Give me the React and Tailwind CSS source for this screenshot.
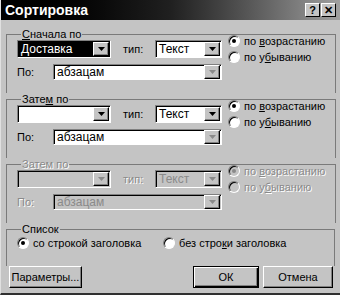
import React from 'react'

const font = { fontFamily: '"Liberation Sans", Arial, sans-serif' }

const Arrow = ({ disabled }) => (
    <span className="flex h-[14px] w-[16px] shrink-0 items-center justify-center border border-t-white border-l-white border-b-black border-r-black bg-[#c4c4c4] shadow-[inset_-1px_-1px_0_#808080]">
        <svg width="7" height="4" viewBox="0 0 7 4">
            <path d="M0 0h7L3.5 4z" fill={disabled ? '#8a8a8a' : '#000'} />
        </svg>
    </span>
)

const Combo = ({ width, value, selected, disabled, dim }) => (
    <div className={`flex items-center justify-between border border-t-[#808080] border-l-[#808080] border-b-white border-r-white shadow-[inset_1px_1px_0_#000] pl-[3px] pr-[1px] ${width} ${selected ? 'bg-black text-white' : disabled ? 'bg-[#c4c4c4] text-[#8a8a8a]' : 'bg-white text-black'}`}>
        <span className="text-[12px] leading-none">{value}</span>
        <Arrow disabled={dim || disabled} />
    </div>
)

const Radio = ({ checked, disabled, children }) => (
    <label className={`flex h-[16px] items-center gap-[4px] whitespace-nowrap text-[11px] leading-[12px] ${disabled ? 'text-[#8a8a8a] [text-shadow:1px_1px_0_#fff]' : 'text-black'}`}>
        <span className={`flex h-[12px] w-[12px] shrink-0 items-center justify-center rounded-full border border-t-[#808080] border-l-[#808080] border-b-white border-r-white shadow-[inset_1px_1px_0_#000] ${disabled ? 'bg-[#c4c4c4]' : 'bg-white'}`}>
            {checked && <span className={`h-[4px] w-[4px] rounded-full ${disabled ? 'bg-[#8a8a8a]' : 'bg-black'}`} />}
        </span>
        <span className="whitespace-nowrap">{children}</span>
    </label>
)

const Group = ({ legend, disabled, first, second }) => (
    <fieldset className="border-t border-l border-r border-[#7a7a7a] px-[10px] pb-[13px]">
        <legend className={`ml-[4px] px-[1px] text-[11px] leading-[12px] ${disabled ? 'text-[#8a8a8a] [text-shadow:1px_1px_0_#fff]' : 'text-black'}`}>{legend}</legend>
        <div className="flex">
            <div className="flex w-[205px] shrink-0 flex-col gap-[6px]">
                <div className="flex h-[18px] items-center">
                    <Combo width="w-[94px] h-[18px]" value={first} selected={first === 'Доставка'} disabled={disabled} />
                    <span className={`ml-[12px] w-[32px] text-[11px] ${disabled ? 'text-[#8a8a8a] [text-shadow:1px_1px_0_#fff]' : 'text-black'}`}>тип:</span>
                    <Combo width="w-[67px] h-[18px]" value="Текст" disabled={disabled} />
                </div>
                <div className="flex h-[16px] items-center">
                    <span className={`w-[36px] text-[11px] ${disabled ? 'text-[#8a8a8a] [text-shadow:1px_1px_0_#fff]' : 'text-black'}`}>По:</span>
                    <Combo width="w-[169px] h-[16px]" value={second} disabled={disabled} dim />
                </div>
            </div>
            <div className="ml-[6px] -mt-[7px] flex flex-col">
                <Radio checked disabled={disabled}>по <u>в</u>озрастанию</Radio>
                <Radio disabled={disabled}>по у<u>б</u>ыванию</Radio>
            </div>
        </div>
    </fieldset>
)

const Button = ({ width, children, isDefault }) => (
    <button className={`flex h-[22px] items-center justify-center text-[11px] text-black bg-[#c4c4c4] ${width} ${isDefault ? 'border border-black shadow-[inset_1px_1px_0_#fff,inset_-1px_-1px_0_#000,inset_-2px_-2px_0_#808080]' : 'border border-t-white border-l-white border-b-black border-r-black shadow-[inset_-1px_-1px_0_#808080]'}`}>
        {children}
    </button>
)

export default function App() {
    return (
        <div className="flex h-[295px] w-[340px] flex-col border-l border-l-[#e0e0e0] border-b-2 border-b-[#303030] bg-[#c4c4c4]" style={font}>
            {/* Title bar */}
            <div className="flex h-[20px] shrink-0 items-center justify-between bg-gradient-to-r from-black via-[#202020] to-[#a0a0a0] pl-[4px] pr-[4px]">
                <span className="text-[14px] font-bold text-white">Сортировка</span>
                <div className="flex gap-[1px]">
                    <span className="flex h-[14px] w-[15px] items-center justify-center border border-t-white border-l-white border-b-black border-r-black bg-[#c4c4c4] text-[11px] font-bold leading-none">?</span>
                    <span className="flex h-[14px] w-[15px] items-center justify-center border border-t-white border-l-white border-b-black border-r-black bg-[#c4c4c4] text-[11px] font-bold leading-none">✕</span>
                </div>
            </div>

            <div className="flex flex-col px-[5px] pt-[8px]">
                <Group legend={<><u>С</u>начала по</>} first="Доставка" second="абзацам" />
                <Group legend={<>Зате<u>м</u> по</>} first="" second="абзацам" />
                <Group legend={<>За<u>т</u>ем по</>} first="" second="абзацам" disabled />

                {/* Список */}
                <fieldset className="border-t border-l border-r border-[#7a7a7a] px-[10px] pb-[15px]">
                    <legend className="ml-[4px] px-[1px] text-[11px] leading-[12px] text-black">Список</legend>
                    <div className="flex h-[16px] items-center">
                        <div className="w-[146px]">
                            <Radio checked>со строкой заголовка</Radio>
                        </div>
                        <Radio>без стро<u>к</u>и заголовка</Radio>
                    </div>
                </fieldset>

                <div className="flex items-center">
                    <Button width="w-[73px] ml-[3px]">Параметры...</Button>
                    <div className="ml-auto flex gap-[4px] pr-[2px]">
                        <Button width="w-[66px]" isDefault>ОК</Button>
                        <Button width="w-[70px]">Отмена</Button>
                    </div>
                </div>
            </div>
        </div>
    )
}
